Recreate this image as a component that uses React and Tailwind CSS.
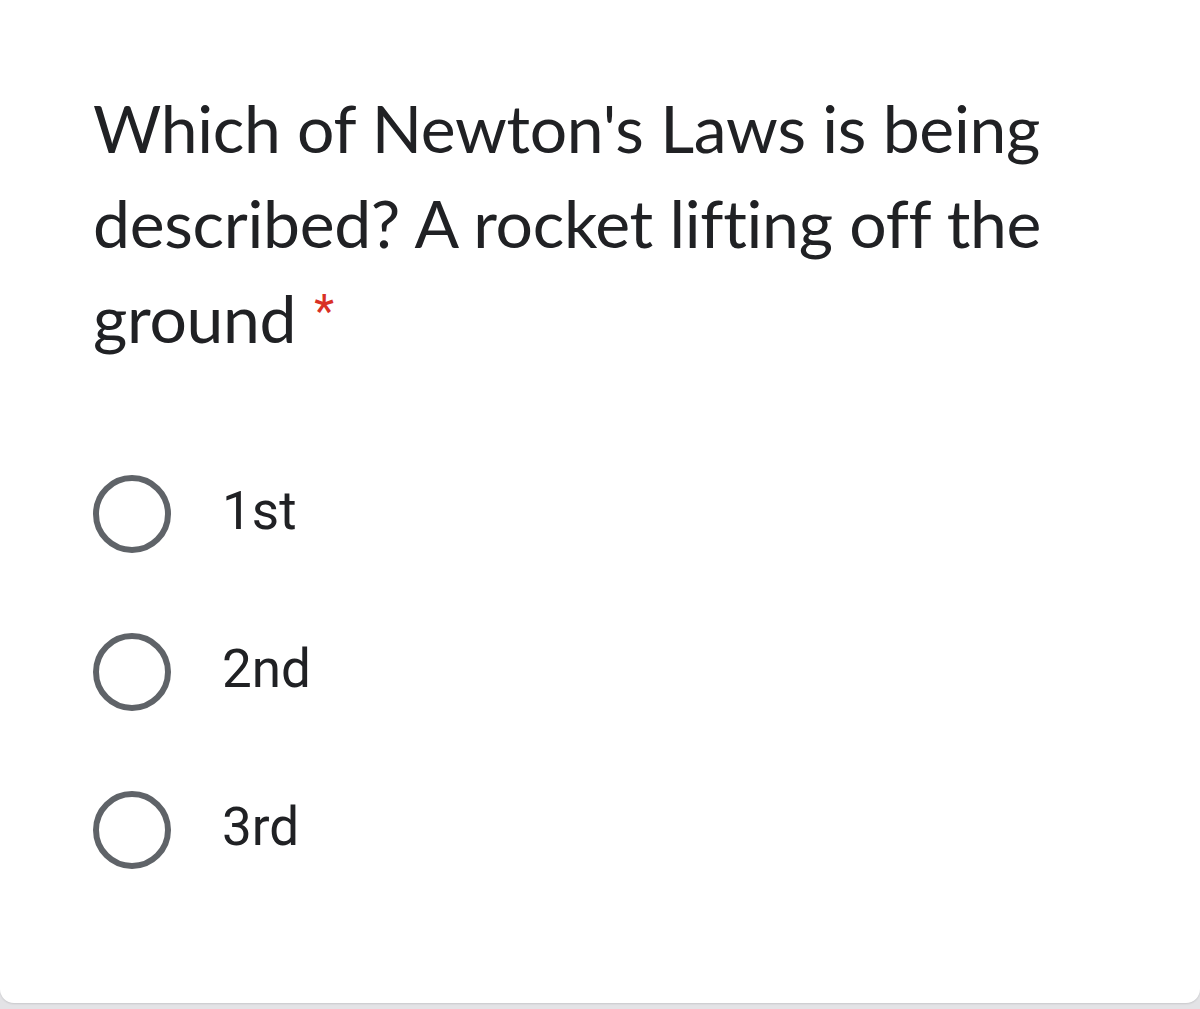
import React from 'react';

const options = ['1st', '2nd', '3rd'];

const App = () => {
  return (
    <div className="w-[1200px] h-[1009px] bg-[#e3e3e6] overflow-hidden">
      <div className="h-[1003px] bg-white rounded-b-[14px] shadow-[0_1px_2px_rgba(0,0,0,0.12)] pt-[80px] pl-[93px]">
        {/* Question title */}
        <h1 className="text-[#202124] text-[66px] leading-[95px] font-['Lato',sans-serif] font-normal whitespace-nowrap tracking-[-0.3px]">
          Which of Newton's Laws is being
          <br />
          described? A rocket lifting off the
          <br />
          ground
          <span className="text-[#d93025] font-['Roboto',sans-serif] text-[46px] leading-none align-top ml-[18px] relative top-[18px]">*</span>
        </h1>

        {/* Options */}
        <div className="mt-[110px] flex flex-col gap-[80px]">
          {options.map((opt) => (
            <label key={opt} className="flex items-center h-[78px]">
              <span className="w-[78px] h-[78px] rounded-full border-[6px] border-[#5f6368] shrink-0" />
              <span className="ml-[51px] text-[#202124] text-[53px] leading-none font-['Roboto',sans-serif] relative top-[-3px]">
                {opt}
              </span>
            </label>
          ))}
        </div>
      </div>
    </div>
  );
};

export default App;
